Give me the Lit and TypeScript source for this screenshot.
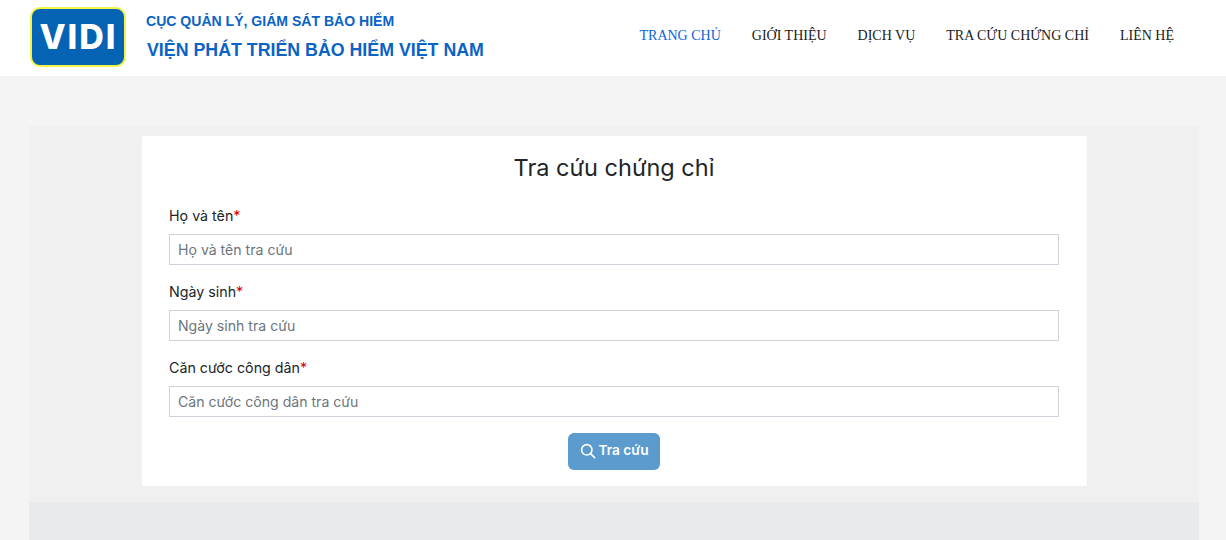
import { LitElement, html, css } from "lit";
import { customElement } from "lit/decorators.js";

const fields = [
  { label: "Họ và tên", ph: "Họ và tên tra cứu" },
  { label: "Ngày sinh", ph: "Ngày sinh tra cứu" },
  { label: "Căn cước công dân", ph: "Căn cước công dân tra cứu" },
];
const nav = ["TRANG CHỦ", "GIỚI THIỆU", "DỊCH VỤ", "TRA CỨU CHỨNG CHỈ", "LIÊN HỆ"];

@customElement("app-root")
export class AppRoot extends LitElement {
  static styles = css`
    :host { display: block; height: 540px; overflow: hidden; background: #f4f4f4; font-family: "Inter", "Noto Sans", sans-serif; }
    * { box-sizing: border-box; }
    header { height: 76px; background: #fff; display: flex; align-items: center; padding: 0 52px 0 30px; justify-content: space-between; }
    .brand { display: flex; align-items: center; gap: 20px; }
    .logo { width: 96px; height: 60px; border-radius: 10px; background: #0563b4; border: 2px solid #f2f542; color: #fff; font: 800 34px/56px "Inter", sans-serif; text-align: center; letter-spacing: 2px; padding-left: 1px; margin-top: -2px; }
    .names { font-family: "Liberation Sans", Arial, sans-serif; font-weight: 700; color: #0b63c5; display: flex; flex-direction: column; gap: 6px; margin-top: -3px; }
    .n1 { font-size: 14.05px; line-height: 20px; }
    .n2 { font-size: 17.8px; line-height: 26px; padding-left: 1px; }
    nav { display: flex; gap: 31px; font: 14px/20px "Liberation Serif", "Times New Roman", serif; color: #212121; margin-top: -4px; }
    nav a.active { color: #0b63dc; }
    main { padding-top: 50px; display: flex; flex-direction: column; align-items: center; }
    .section { width: 1170px; height: 376px; background: #f0f0f0; padding: 10px 112px 0 113px; margin-left: 2px; }
    .card { height: 350px; background: #fff; border-radius: 2px; padding: 17px 28px 0 27px; display: flex; flex-direction: column; }
    h1 { margin: 0 0 23px; font-size: 23.5px; font-weight: 400; line-height: 30px; text-align: center; color: #212529; }
    .field { display: flex; flex-direction: column; gap: 8px; margin-bottom: 17px; }
    label { font-size: 14.25px; line-height: 20px; color: #212529; height: 20px; }
    .req { color: #e00000; }
    .input { height: 31px; border: 1px solid #ced4da; padding: 0 8px; font-size: 14.1px; line-height: 29px; color: #6c757d; background: #fff; }
    .btn-row { display: flex; justify-content: center; margin-top: -1px; }
    .btn { width: 92px; height: 37px; border-radius: 6px; background: #5b9bce; color: #fff; font-size: 13.7px; font-weight: 600; display: flex; align-items: center; justify-content: center; gap: 2px; padding-left: 1px; }
    .btn svg { display: block; margin-top: -1px; }
    .btn span { margin-top: -3px; }
    .footer { width: 1170px; height: 60px; background: #e9eaee; margin-left: 2px; }
  `;

  render() {
    return html`
      <header>
        <div class="brand">
          <div class="logo">VIDI</div>
          <div class="names">
            <div class="n1">CỤC QUẢN LÝ, GIÁM SÁT BẢO HIỂM</div>
            <div class="n2">VIỆN PHÁT TRIỂN BẢO HIỂM VIỆT NAM</div>
          </div>
        </div>
        <nav>${nav.map((n, i) => html`<a class=${i === 0 ? "active" : ""}>${n}</a>`)}</nav>
      </header>
      <main>
        <div class="section">
          <div class="card">
            <h1>Tra cứu chứng chỉ</h1>
            ${fields.map((f) => html`
              <div class="field">
                <label>${f.label}<span class="req">*</span></label>
                <div class="input">${f.ph}</div>
              </div>`)}
            <div class="btn-row">
              <div class="btn">
                <svg width="16" height="16" viewBox="0 0 16 16" fill="none" stroke="#fff" stroke-width="1.6" stroke-linecap="round"><circle cx="6.8" cy="6.8" r="5.2"/><path d="M10.6 10.6L14.6 14.6"/></svg>
                <span>Tra cứu</span>
              </div>
            </div>
          </div>
        </div>
        <div class="footer"></div>
      </main>
    `;
  }
}
